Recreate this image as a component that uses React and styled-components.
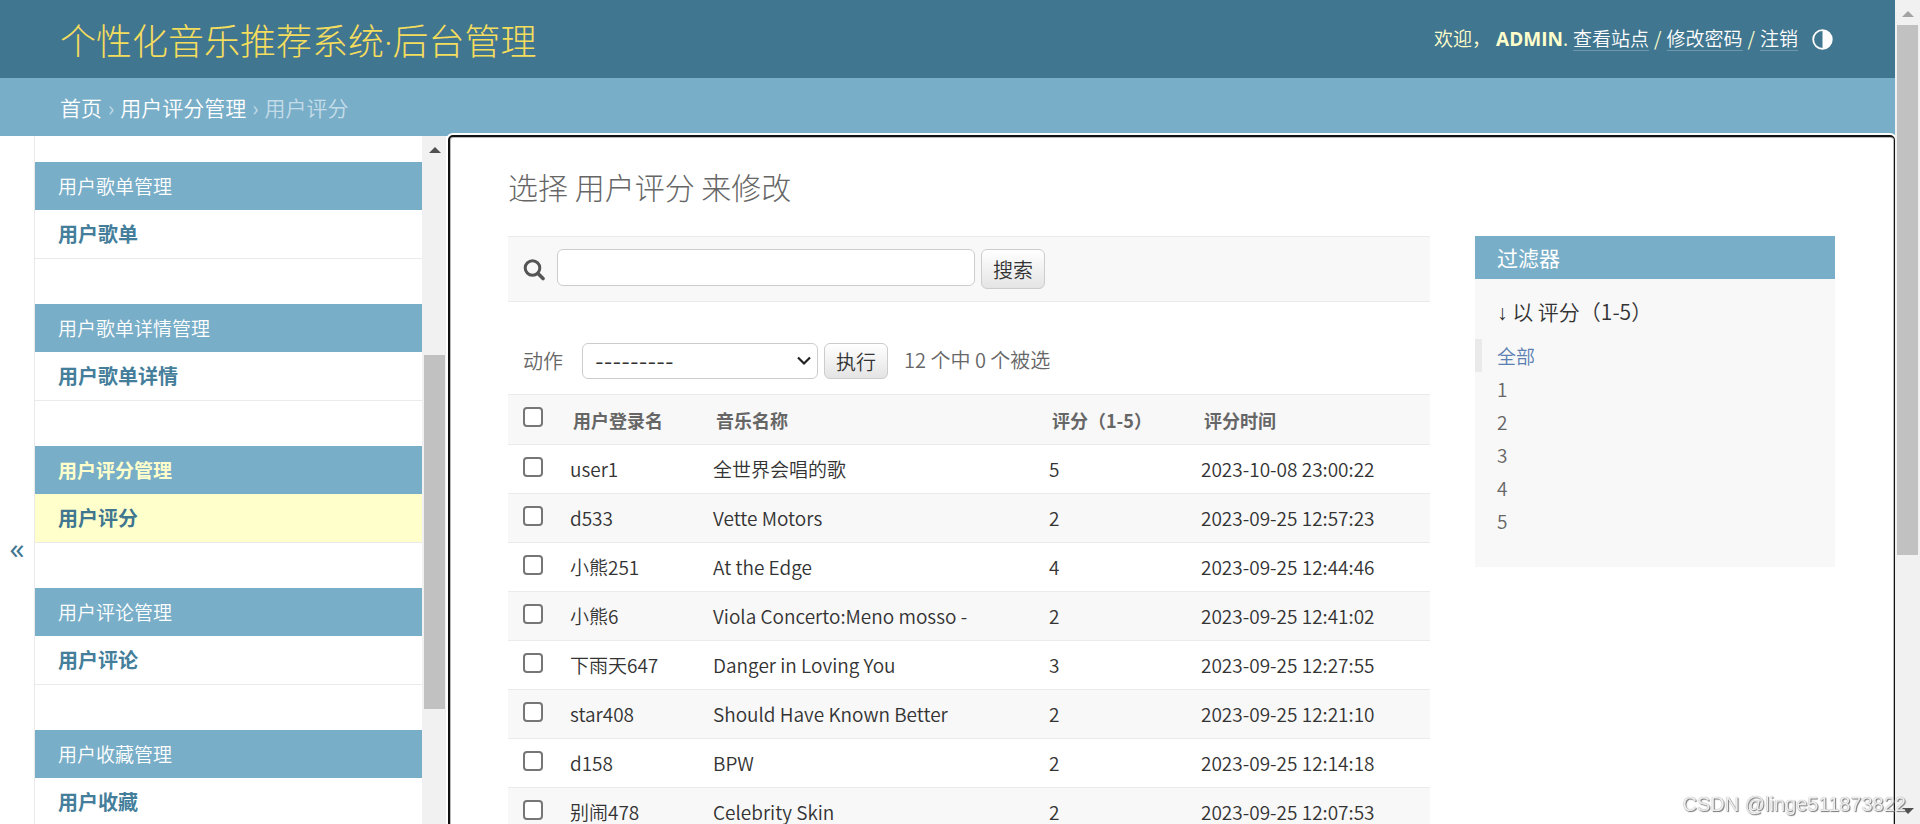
import React, { useState } from 'react';
import styled, { createGlobalStyle } from 'styled-components';

const GlobalStyle = createGlobalStyle`
  * {
    box-sizing: border-box;
  }

  body {
    margin: 0;
    background: #fff;
    color: #333;
    font-family: "Noto Sans CJK SC", "Open Sans", sans-serif;
    font-size: 19px;
    line-height: 28px;
    font-weight: 350;
  }

  a {
    text-decoration: none;
  }

  button, input, select {
    font-family: inherit;
    font-size: inherit;
    font-weight: inherit;
  }
`;

const Shell = styled.div`
  display: flex;
  height: 100vh;
  overflow: hidden;
`;

const Page = styled.div`
  flex: 1;
  min-width: 0;
  display: flex;
  flex-direction: column;
`;

const Header = styled.header`
  flex: none;
  display: flex;
  align-items: center;
  justify-content: space-between;
  height: 78px;
  padding: 0 62px 0 60px;
  background: #417690;
  color: #ffc;
`;

const SiteName = styled.h1`
  margin: 0;
  padding-top: 6px;
  font-family: "Open Sans", "Noto Sans CJK SC", sans-serif;
  font-size: 36px;
  line-height: 48px;
  font-weight: 300;
  color: #f5dd5d;
`;

const UserTools = styled.div`
  display: flex;
  align-items: center;
  gap: 5px;
  padding-bottom: 2px;
  white-space: nowrap;
`;

const ToolLink = styled.a`
  height: 25px;
  line-height: 24px;
  color: #fff;
  border-bottom: 1px solid rgba(255, 255, 255, 0.25);
`;

const UserName = styled.strong`
  margin-left: 5px;
  font-family: "Open Sans", sans-serif;
  font-weight: 700;
`;

const ThemeButton = styled.button`
  display: flex;
  margin-left: 9px;
  padding: 2px 0 0;
  border: none;
  background: none;
  color: #fff;
  cursor: pointer;
`;

const Breadcrumbs = styled.nav`
  flex: none;
  display: flex;
  align-items: center;
  gap: 6px;
  height: 58px;
  padding: 0 60px;
  background: #79aec8;
  color: #c4dce8;
  font-size: 21px;

  a {
    color: #fff;
  }
`;

const Body = styled.div`
  flex: 1;
  min-height: 0;
  display: flex;
`;

const ToggleColumn = styled.div`
  flex: none;
  width: 35px;
  border-right: 1px solid #eaeaea;
`;

const ToggleButton = styled.button`
  width: 100%;
  height: 100vh;
  padding: 0 0 2px;
  border: none;
  background: none;
  color: #417690;
  font-family: "Open Sans", sans-serif;
  font-size: 30px;
  font-weight: 400;
  cursor: pointer;
`;

const Sidebar = styled.nav`
  flex: none;
  width: 387px;
  padding-top: 26px;
  overflow: hidden;
`;

const Module = styled.section`
  margin-bottom: 45px;
  border-bottom: 1px solid #eaeaea;
`;

const ModuleTitle = styled.a`
  display: block;
  height: 48px;
  padding-left: 23px;
  line-height: 48px;
  background: #79aec8;
  color: ${props => (props.$current ? '#ffc' : '#fff')};
  font-weight: ${props => (props.$current ? 700 : 350)};
`;

const ModelLink = styled.a`
  display: block;
  height: 48px;
  padding-left: 23px;
  font-size: 20px;
  line-height: 48px;
  background: ${props => (props.$current ? '#ffc' : '#fff')};
  color: ${props => (props.$current ? '#417690' : '#447e9b')};
  font-weight: 700;
`;

const ScrollTrack = styled.div`
  position: relative;
  flex: none;
  width: ${props => props.$width};
  background: #f1f1f1;
`;

const ScrollThumb = styled.div`
  position: absolute;
  top: ${props => props.$top};
  left: 2px;
  width: 21px;
  height: ${props => props.$height};
  background: #c1c1c1;
`;

const ScrollArrow = styled.div`
  position: absolute;
  left: 7px;
  ${props => (props.$down ? 'bottom: 10px' : 'top: 11px')};
  border: 6px solid transparent;
  border-top-width: ${props => (props.$down ? '6px' : '0')};
  border-bottom-width: ${props => (props.$down ? '0' : '6px')};
  border-top-color: ${props => props.$color};
  border-bottom-color: ${props => props.$color};
`;

const Main = styled.main`
  position: relative;
  flex: 1;
  min-width: 0;
  margin: -1px 0 -10px 2px;
  padding: 28px 59px 0 58px;
  border: 2px solid #111;
  border-right-width: 1px;
  border-radius: 5px;
  background: #fff;
  box-shadow: 0 0 0 2px #fff, inset 0 0 0 1px #bbb;
  overflow: hidden;
`;

const PageTitle = styled.h2`
  margin: 0 0 29px;
  font-size: 30px;
  line-height: 42px;
  font-weight: 300;
  color: #666;
`;

const Columns = styled.div`
  display: flex;
  align-items: flex-start;
  gap: 45px;
`;

const ChangeList = styled.div`
  flex: 1;
  min-width: 0;
`;

const SearchBar = styled.form`
  display: flex;
  align-items: flex-start;
  gap: 6px;
  height: 66px;
  padding: 12px 15px;
  border-top: 1px solid #eaeaea;
  border-bottom: 1px solid #eaeaea;
  background: #f8f8f8;
`;

const SearchLabel = styled.label`
  width: 28px;
  padding-top: 10px;
  line-height: 0;
`;

const SearchInput = styled.input`
  width: 418px;
  height: 37px;
  padding: 3px 9px;
  border: 1px solid #ccc;
  border-radius: 6px;
  background: #fff;
`;

const Button = styled.button`
  height: ${props => (props.$tall ? '40px' : '36px')};
  padding: 1px 11px 0;
  border: 1px solid #ccc;
  border-radius: 6px;
  background: linear-gradient(#fff, #e4e4e4);
  color: #333;
  font-size: 20px;
  line-height: 28px;
  cursor: pointer;
`;

const Actions = styled.form`
  display: flex;
  align-items: center;
  gap: 6px;
  padding: 41px 15px 15px;
  color: #666;
  font-size: 20px;
`;

const SelectWrap = styled.div`
  position: relative;
  width: 236px;
  height: 36px;
  margin-left: 13px;

  svg {
    position: absolute;
    top: 13px;
    right: 7px;
    pointer-events: none;
  }
`;

const Select = styled.select`
  appearance: none;
  display: block;
  width: 100%;
  height: 100%;
  padding: 2px 12px 0;
  border: 1px solid #ccc;
  border-radius: 6px;
  background: #fff;
  color: #333;
  font-family: "Inter", "Noto Sans CJK SC", sans-serif;
  font-size: 19px;
  font-weight: 400;
`;

const Counter = styled.span`
  margin-left: 10px;
  padding-bottom: 2px;
`;

const Table = styled.table`
  width: 100%;
  table-layout: fixed;
  border-collapse: collapse;

  tbody tr:nth-child(even) {
    background: #f8f8f8;
  }
`;

const Col = styled.col`
  width: ${props => props.$width};
`;

const Th = styled.th`
  height: 50px;
  padding: 0 15px;
  border-top: 1px solid #eaeaea;
  border-bottom: 1px solid #eaeaea;
  background: #f8f8f8;
  color: #666;
  font-size: 18px;
  font-weight: 700;
  text-align: left;
`;

const Td = styled.td`
  height: 49px;
  padding: 0 12px;
  border-bottom: 1px solid #eaeaea;
  white-space: nowrap;
`;

const Check = styled.input`
  display: block;
  appearance: none;
  width: 20px;
  height: 20px;
  margin: 0 0 5px;
  border: 2px solid #767676;
  border-radius: 4px;
  background: #fff;

  &:checked {
    background: #417690;
  }
`;

const CheckTh = styled(Th)`
  padding: 0 15px;
`;

const CheckTd = styled(Td)`
  padding: 0 15px;
`;

const Filter = styled.aside`
  flex: none;
  width: 360px;
  padding-bottom: 30px;
  background: #f8f8f8;
`;

const FilterTitle = styled.h2`
  margin: 0 0 18px;
  padding: 2px 22px;
  background: #79aec8;
  color: #fff;
  font-size: 21px;
  line-height: 39px;
  font-weight: 400;
`;

const FilterName = styled.h3`
  margin: 0 0 14px;
  padding: 0 22px;
  font-size: 21px;
  line-height: 28px;
  font-weight: 350;
`;

const SortArrow = styled.span`
  font-family: "Liberation Sans", sans-serif;
  line-height: 20px;
`;

const FilterList = styled.ul`
  margin: 0;
  padding: 0;
  list-style: none;
`;

const FilterLink = styled.a`
  display: block;
  height: 33px;
  padding-left: 15px;
  border-left: 7px solid ${props => (props.$selected ? '#eaeaea' : 'transparent')};
  line-height: 33px;
  color: ${props => (props.$selected ? '#5b80b2' : '#666')};
`;

const Watermark = styled.div`
  position: fixed;
  right: 14px;
  bottom: 6px;
  font-family: "Liberation Sans", sans-serif;
  font-size: 20px;
  line-height: 28px;
  color: #eee;
  text-shadow: 1px 1px 1px #777, 0 0 1px #999;
`;

const modules = [
  { title: '用户歌单管理', model: '用户歌单' },
  { title: '用户歌单详情管理', model: '用户歌单详情' },
  { title: '用户评分管理', model: '用户评分', current: true },
  { title: '用户评论管理', model: '用户评论' },
  { title: '用户收藏管理', model: '用户收藏' },
];

const ratings = [
  { user: 'user1', music: '全世界会唱的歌', score: 5, time: '2023-10-08 23:00:22' },
  { user: 'd533', music: 'Vette Motors', score: 2, time: '2023-09-25 12:57:23' },
  { user: '小熊251', music: 'At the Edge', score: 4, time: '2023-09-25 12:44:46' },
  { user: '小熊6', music: 'Viola Concerto:Meno mosso -', score: 2, time: '2023-09-25 12:41:02' },
  { user: '下雨天647', music: 'Danger in Loving You', score: 3, time: '2023-09-25 12:27:55' },
  { user: 'star408', music: 'Should Have Known Better', score: 2, time: '2023-09-25 12:21:10' },
  { user: 'd158', music: 'BPW', score: 2, time: '2023-09-25 12:14:18' },
  { user: '别闹478', music: 'Celebrity Skin', score: 2, time: '2023-09-25 12:07:53' },
];

const filters = ['全部', '1', '2', '3', '4', '5'];

const App = () => {
  const [filter, setFilter] = useState('全部');

  return (
    <>
      <GlobalStyle />
      <Shell>
        <Page>
          <Header>
            <SiteName>个性化音乐推荐系统·后台管理</SiteName>
            <UserTools>
              <span>欢迎，<UserName>ADMIN</UserName>.</span>
              <ToolLink href="#site">查看站点</ToolLink>
              <span>/</span>
              <ToolLink href="#password">修改密码</ToolLink>
              <span>/</span>
              <ToolLink href="#logout">注销</ToolLink>
              <ThemeButton type="button" aria-label="切换主题">
                <svg width="21" height="21" viewBox="0 0 21 21">
                  <circle cx="10.5" cy="10.5" r="9.3" fill="none" stroke="currentColor" strokeWidth="1.8" />
                  <path d="M10.5 1a9.5 9.5 0 0 1 0 19z" fill="currentColor" />
                </svg>
              </ThemeButton>
            </UserTools>
          </Header>

          <Breadcrumbs aria-label="Breadcrumbs">
            <a href="#home">首页</a>
            <span>›</span>
            <a href="#ratings">用户评分管理</a>
            <span>›</span>
            <span>用户评分</span>
          </Breadcrumbs>

          <Body>
            <ToggleColumn>
              <ToggleButton type="button" aria-label="切换导航">«</ToggleButton>
            </ToggleColumn>
            <Sidebar aria-label="Sidebar">
              {modules.map(item => (
                <Module key={item.title}>
                  <ModuleTitle href="#app" $current={item.current}>{item.title}</ModuleTitle>
                  <ModelLink href="#model" $current={item.current}>{item.model}</ModelLink>
                </Module>
              ))}
            </Sidebar>
            <ScrollTrack $width="24px">
              <ScrollArrow $color="#505050" />
              <ScrollThumb $top="31.8%" $height="51.5%" />
            </ScrollTrack>

            <Main>
              <PageTitle>选择 用户评分 来修改</PageTitle>
              <Columns>
                <ChangeList>
                  <SearchBar role="search" onSubmit={e => e.preventDefault()}>
                    <SearchLabel htmlFor="searchbar" aria-label="搜索">
                      <svg width="22" height="22" viewBox="0 0 22 22" fill="none" stroke="#555">
                        <circle cx="9.5" cy="9" r="7.3" strokeWidth="3" />
                        <path d="M15 14.5l5 5" strokeWidth="3.6" strokeLinecap="round" />
                      </svg>
                    </SearchLabel>
                    <SearchInput id="searchbar" type="text" />
                    <Button type="submit" $tall>搜索</Button>
                  </SearchBar>

                  <Actions onSubmit={e => e.preventDefault()}>
                    <label htmlFor="action">动作</label>
                    <SelectWrap>
                      <Select id="action">
                        <option>---------</option>
                      </Select>
                      <svg width="14" height="10" viewBox="0 0 14 10" fill="none" stroke="#222" strokeWidth="2.2">
                        <path d="M1 1.5l6 6 6-6" />
                      </svg>
                    </SelectWrap>
                    <Button type="submit">执行</Button>
                    <Counter>12 个中 0 个被选</Counter>
                  </Actions>

                  <Table>
                    <colgroup>
                      <Col $width="50px" />
                      <Col $width="143px" />
                      <Col />
                      <Col $width="152px" />
                      <Col $width="241px" />
                    </colgroup>
                    <thead>
                      <tr>
                        <CheckTh><Check type="checkbox" aria-label="全选" /></CheckTh>
                        <Th>用户登录名</Th>
                        <Th>音乐名称</Th>
                        <Th>评分（1-5）</Th>
                        <Th>评分时间</Th>
                      </tr>
                    </thead>
                    <tbody>
                      {ratings.map(row => (
                        <tr key={row.time}>
                          <CheckTd><Check type="checkbox" aria-label={row.user} /></CheckTd>
                          <Td>{row.user}</Td>
                          <Td>{row.music}</Td>
                          <Td>{row.score}</Td>
                          <Td>{row.time}</Td>
                        </tr>
                      ))}
                    </tbody>
                  </Table>
                </ChangeList>

                <Filter>
                  <FilterTitle>过滤器</FilterTitle>
                  <FilterName><SortArrow>↓</SortArrow> 以 评分（1-5）</FilterName>
                  <FilterList>
                    {filters.map(value => (
                      <li key={value}>
                        <FilterLink
                          href="#filter"
                          $selected={value === filter}
                          onClick={() => setFilter(value)}
                        >
                          {value}
                        </FilterLink>
                      </li>
                    ))}
                  </FilterList>
                </Filter>
              </Columns>
            </Main>
          </Body>
        </Page>
        <ScrollTrack $width="25px">
          <ScrollArrow $color="#a3a3a3" />
          <ScrollThumb $top="25px" $height="64.3%" />
          <ScrollArrow $color="#505050" $down />
        </ScrollTrack>
      </Shell>
      <Watermark>CSDN @linge511873822</Watermark>
    </>
  );
};

export default App;
